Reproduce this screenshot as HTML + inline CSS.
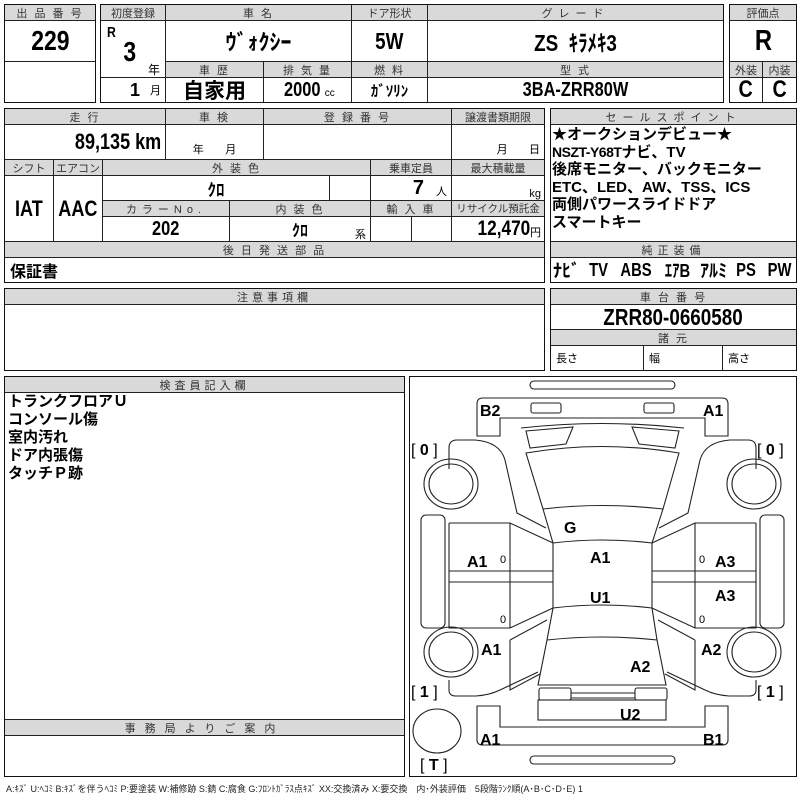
<!DOCTYPE html>
<html><head><meta charset="utf-8"><style>
*{margin:0;padding:0;box-sizing:border-box}
body{width:800px;height:800px;background:#fff;position:relative;overflow:hidden;font-family:"Liberation Sans","Noto Sans CJK JP",sans-serif;color:#000}
.c{position:absolute;border:1px solid #222;display:flex;align-items:center;justify-content:center;white-space:nowrap}
.h{background:#d9d9d9;font-size:11px;color:#333;letter-spacing:2px}
.o{position:absolute;border:1.5px solid #111}
.v{font-family:"Liberation Sans","Noto Sans CJK JP",sans-serif;font-weight:bold}
.n{display:inline-block;transform:scaleX(.82)}
.nr{display:inline-block;transform:scaleX(.82);transform-origin:right center}
.t{position:absolute;white-space:nowrap}
svg{position:absolute;left:0;top:0}
</style></head><body>
<div class="c h" style="left:4px;top:4px;width:92px;height:17px">出 品 番 号</div>
<div class="c v" style="left:4px;top:20px;width:92px;height:42px;font-size:28px"><span class="n">229</span></div>
<div class="c" style="left:4px;top:61px;width:92px;height:42px"></div>
<div class="o" style="left:4px;top:4px;width:92px;height:99px"></div>
<div class="c h" style="left:100px;top:4px;width:66px;height:17px;letter-spacing:0">初度登録</div>
<div class="c h" style="left:165px;top:4px;width:187px;height:17px">車 名</div>
<div class="c h" style="left:351px;top:4px;width:77px;height:17px;letter-spacing:0">ドア形状</div>
<div class="c h" style="left:427px;top:4px;width:297px;height:17px;letter-spacing:6px">グレード</div>
<div class="c" style="left:100px;top:20px;width:66px;height:58px"></div>
<div class="t v" style="left:106px;top:24px;font-size:15px"><span class="n">R</span></div>
<div class="t v" style="left:122px;top:36px;font-size:28px"><span class="n">3</span></div>
<div class="t" style="left:148px;top:61px;font-size:12px">年</div>
<div class="c" style="left:100px;top:77px;width:66px;height:26px;justify-content:flex-end;padding-right:4px"><span class="v" style="font-size:18px">1</span><span style="font-size:11px;margin-left:10px">月</span></div>
<div class="c v" style="left:165px;top:20px;width:187px;height:42px;font-size:22px">ｳﾞｫｸｼｰ</div>
<div class="c v" style="left:351px;top:20px;width:77px;height:42px;font-size:23px"><span class="n">5W</span></div>
<div class="c v" style="left:427px;top:20px;width:297px;height:42px;font-size:23px"><span class="n">ZS&nbsp; ｷﾗﾒｷ3</span></div>
<div class="c h" style="left:165px;top:61px;width:99px;height:17px">車 歴</div>
<div class="c h" style="left:263px;top:61px;width:89px;height:17px">排 気 量</div>
<div class="c h" style="left:351px;top:61px;width:77px;height:17px">燃 料</div>
<div class="c h" style="left:427px;top:61px;width:297px;height:17px">型 式</div>
<div class="c v" style="left:165px;top:77px;width:99px;height:26px;font-size:21px">自家用</div>
<div class="c" style="left:263px;top:77px;width:89px;height:26px"><span class="v n" style="font-size:20px">2000</span><span style="font-size:10px;margin-top:6px">cc</span></div>
<div class="c v" style="left:351px;top:77px;width:77px;height:26px;font-size:15px">ｶﾞｿﾘﾝ</div>
<div class="c v" style="left:427px;top:77px;width:297px;height:26px;font-size:20px"><span class="n">3BA-ZRR80W</span></div>
<div class="o" style="left:100px;top:4px;width:624px;height:99px"></div>
<div class="c h" style="left:729px;top:4px;width:68px;height:17px;letter-spacing:0">評価点</div>
<div class="c v" style="left:729px;top:20px;width:68px;height:42px;font-size:29px"><span class="n">R</span></div>
<div class="c h" style="left:729px;top:61px;width:34px;height:17px;letter-spacing:0">外装</div>
<div class="c h" style="left:762px;top:61px;width:35px;height:17px;letter-spacing:0">内装</div>
<div class="c v" style="left:729px;top:77px;width:34px;height:26px;font-size:24px"><span class="n">C</span></div>
<div class="c v" style="left:762px;top:77px;width:35px;height:26px;font-size:24px"><span class="n">C</span></div>
<div class="o" style="left:729px;top:4px;width:68px;height:99px"></div>
<div class="c h" style="left:4px;top:108px;width:162px;height:17px">走 行</div>
<div class="c h" style="left:165px;top:108px;width:99px;height:17px">車 検</div>
<div class="c h" style="left:263px;top:108px;width:189px;height:17px">登 録 番 号</div>
<div class="c h" style="left:451px;top:108px;width:94px;height:17px;letter-spacing:0">譲渡書類期限</div>
<div class="c v" style="left:4px;top:124px;width:162px;height:36px;justify-content:flex-end;padding-right:4px;font-size:22px"><span class="nr">89,135 km</span></div>
<div class="c" style="left:165px;top:124px;width:99px;height:36px;align-items:flex-end;font-size:11px;padding-bottom:2px">年&nbsp;&nbsp;&nbsp;&nbsp;&nbsp;&nbsp;&nbsp;月</div>
<div class="c" style="left:263px;top:124px;width:189px;height:36px"></div>
<div class="c" style="left:451px;top:124px;width:94px;height:36px;align-items:flex-end;justify-content:flex-end;padding:0 4px 2px 0;font-size:11px">月&nbsp;&nbsp;&nbsp;&nbsp;&nbsp;&nbsp;&nbsp;日</div>
<div class="c h" style="left:4px;top:159px;width:50px;height:17px;letter-spacing:0">シフト</div>
<div class="c h" style="left:53px;top:159px;width:50px;height:17px;letter-spacing:0">エアコン</div>
<div class="c h" style="left:102px;top:159px;width:269px;height:17px">外 装 色</div>
<div class="c h" style="left:370px;top:159px;width:82px;height:17px;letter-spacing:0">乗車定員</div>
<div class="c h" style="left:451px;top:159px;width:94px;height:17px;letter-spacing:0">最大積載量</div>
<div class="c v" style="left:4px;top:175px;width:50px;height:67px;font-size:22px"><span class="n">IAT</span></div>
<div class="c v" style="left:53px;top:175px;width:50px;height:67px;font-size:22px"><span class="n">AAC</span></div>
<div class="c v" style="left:102px;top:175px;width:228px;height:26px;font-size:17px">ｸﾛ</div>
<div class="c" style="left:329px;top:175px;width:42px;height:26px"></div>
<div class="c" style="left:370px;top:175px;width:82px;height:26px;justify-content:flex-end;padding-right:4px"><span class="v" style="font-size:20px">7</span><span style="font-size:11px;margin:6px 0 0 12px">人</span></div>
<div class="c" style="left:451px;top:175px;width:94px;height:26px;justify-content:flex-end;padding-right:3px;font-size:11px;align-items:flex-end">kg</div>
<div class="c h" style="left:102px;top:200px;width:128px;height:17px;letter-spacing:5px">カラーNo.</div>
<div class="c h" style="left:229px;top:200px;width:142px;height:17px">内 装 色</div>
<div class="c h" style="left:370px;top:200px;width:82px;height:17px">輸 入 車</div>
<div class="c h" style="left:451px;top:200px;width:94px;height:17px;letter-spacing:0;font-size:10.5px">リサイクル預託金</div>
<div class="c v" style="left:102px;top:216px;width:128px;height:26px;font-size:20px"><span class="n">202</span></div>
<div class="c v" style="left:229px;top:216px;width:142px;height:26px;font-size:16px">ｸﾛ</div>
<div class="t" style="left:355px;top:226px;font-size:11px">系</div>
<div class="c" style="left:370px;top:216px;width:42px;height:26px"></div>
<div class="c" style="left:411px;top:216px;width:41px;height:26px"></div>
<div class="c" style="left:451px;top:216px;width:94px;height:26px;justify-content:flex-end;padding-right:3px"><span class="v nr" style="font-size:21px">12,470</span><span style="font-size:11px;margin-top:6px">円</span></div>
<div class="c h" style="left:4px;top:241px;width:541px;height:17px">後 日 発 送 部 品</div>
<div class="c v" style="left:4px;top:257px;width:541px;height:26px;justify-content:flex-start;padding-left:5px;font-size:16px">保証書</div>
<div class="o" style="left:4px;top:108px;width:541px;height:175px"></div>
<div class="c h" style="left:550px;top:108px;width:247px;height:17px;letter-spacing:6px">セールスポイント</div>
<div class="c" style="left:550px;top:124px;width:247px;height:118px"></div>
<div class="t v" style="left:552px;top:126px;font-size:15px;line-height:17.6px">★オークションデビュー★<br><span style="font-size:14px;letter-spacing:-0.5px">NSZT-Y68T</span>ナビ、TV<br>後席モニター、バックモニター<br>ETC、LED、AW、TSS、ICS<br>両側パワースライドドア<br>スマートキー</div>
<div class="c h" style="left:550px;top:241px;width:247px;height:17px;letter-spacing:5px">純正装備</div>
<div class="c v" style="left:550px;top:257px;width:247px;height:26px;font-size:18px;justify-content:space-between;padding:0 2px"><span>ﾅﾋﾞ</span><span class="n">TV</span><span class="n">ABS</span><span class="n">ｴｱB</span><span>ｱﾙﾐ</span><span class="n">PS</span><span class="n">PW</span></div>
<div class="o" style="left:550px;top:108px;width:247px;height:175px"></div>
<div class="c h" style="left:4px;top:288px;width:541px;height:17px;letter-spacing:4px">注意事項欄</div>
<div class="o" style="left:4px;top:288px;width:541px;height:83px"></div>
<div class="c h" style="left:550px;top:288px;width:247px;height:17px">車 台 番 号</div>
<div class="c v" style="left:550px;top:304px;width:247px;height:26px;font-size:23px"><span class="n">ZRR80-0660580</span></div>
<div class="c h" style="left:550px;top:329px;width:247px;height:17px">諸 元</div>
<div class="c" style="left:550px;top:345px;width:94px;height:26px;justify-content:flex-start;padding-left:5px;font-size:11px">長さ</div>
<div class="c" style="left:643px;top:345px;width:80px;height:26px;justify-content:flex-start;padding-left:5px;font-size:11px">幅</div>
<div class="c" style="left:722px;top:345px;width:75px;height:26px;justify-content:flex-start;padding-left:5px;font-size:11px">高さ</div>
<div class="o" style="left:550px;top:288px;width:247px;height:83px"></div>
<div class="c h" style="left:4px;top:376px;width:401px;height:17px;letter-spacing:4px">検査員記入欄</div>
<div class="t v" style="left:8px;top:393px;font-size:15px;line-height:18px">トランクフロアＵ<br>コンソール傷<br>室内汚れ<br>ドア内張傷<br>タッチＰ跡</div>
<div class="c h" style="left:4px;top:719px;width:401px;height:17px;letter-spacing:9px">事務局よりご案内</div>
<div class="o" style="left:4px;top:376px;width:401px;height:401px"></div>
<div class="o" style="left:409px;top:376px;width:388px;height:401px"></div>
<div class="t" style="left:6px;top:782px;font-size:9px;color:#222">A:ｷｽﾞ U:ﾍｺﾐ B:ｷｽﾞを伴うﾍｺﾐ P:要塗装 W:補修跡 S:錆 C:腐食 G:ﾌﾛﾝﾄｶﾞﾗｽ点ｷｽﾞ XX:交換済み X:要交換　内･外装評価　5段階ﾗﾝｸ順(A･B･C･D･E) 1</div>
<svg width="800" height="800" viewBox="0 0 800 800" fill="none" stroke="#222" stroke-width="1.1">
<g id="L">
<path d="M449,469 L449,448 Q449,440 457,440 L475,440 Q500,442 505,460 L517,513 L546,528"/>
<ellipse cx="451" cy="484" rx="27" ry="25"/><ellipse cx="451" cy="484" rx="22" ry="20"/>
<rect x="421" y="515" width="24" height="113" rx="5"/>
<path d="M449,523 L510,523 L553,543 M449,523 L449,628 L510,628 L553,608 M510,523 L510,628 M449,571 L553,571 M449,582 L553,582"/>
<ellipse cx="451" cy="652" rx="27" ry="25"/><ellipse cx="451" cy="652" rx="22" ry="20"/>
<path d="M510,640 L547,620 M510,640 L510,690 L540,674 M449,680 L449,690 Q449,696 456,696 L476,696 Q490,695 500,690 L538,672"/>
</g>
<use href="#L" transform="translate(1205,0) scale(-1,1)"/>
<rect x="530" y="381" width="145" height="8" rx="4"/>
<path d="M477,436 L477,404 Q477,398 483,398 L722,398 Q728,398 728,404 L728,436 L705,436 L705,418 L500,418 L500,436 Z"/>
<rect x="531" y="403" width="30" height="10" rx="2"/><rect x="644" y="403" width="30" height="10" rx="2"/>
<path d="M521,428 Q602,419 684,428 M526,431 L573,427 L566,444 L530,448 Z M679,431 L632,427 L639,444 L675,448 Z"/>
<path d="M526,453 Q602,440 679,453 L663,509 Q602,502 543,509 Z"/>
<path d="M543,509 L553,543 Q602,537 652,543 L663,509"/>
<path d="M553,543 L553,608 Q602,602 652,608 L652,543"/>
<path d="M553,608 L547,640 Q602,634 657,640 L652,608 M547,640 L538,685 L666,685 L657,640"/>
<rect x="539" y="688" width="32" height="12" rx="2"/><rect x="635" y="688" width="32" height="12" rx="2"/>
<path d="M571,693 L635,693 M571,698 L635,698"/>
<rect x="538" y="700" width="128" height="20"/>
<path d="M477,706 L500,706 L500,727 L705,727 L705,706 L728,706 L728,740 Q728,745 722,745 L483,745 Q477,745 477,740 Z"/>
<rect x="530" y="756" width="145" height="8" rx="4"/>
<ellipse cx="437" cy="731" rx="24" ry="22"/>
<g fill="#000" stroke="none" font-family="Liberation Sans,sans-serif" font-weight="bold" font-size="16">
<text x="480" y="416">B2</text><text x="703" y="416">A1</text>
<text x="564" y="533">G</text>
<text x="467" y="567">A1</text><text x="590" y="563">A1</text><text x="715" y="567">A3</text>
<text x="715" y="601">A3</text><text x="590" y="603">U1</text>
<text x="481" y="655">A1</text><text x="701" y="655">A2</text><text x="630" y="672">A2</text>
<text x="620" y="720">U2</text><text x="480" y="745">A1</text><text x="703" y="745">B1</text>
</g>
<g fill="#000" stroke="none" font-family="Liberation Sans,sans-serif" font-size="16">
<text x="411" y="455">[ <tspan font-weight="bold">0</tspan> ]</text><text x="757" y="455">[ <tspan font-weight="bold">0</tspan> ]</text>
<text x="411" y="697">[ <tspan font-weight="bold">1</tspan> ]</text><text x="757" y="697">[ <tspan font-weight="bold">1</tspan> ]</text>
<text x="420" y="770">[ <tspan font-weight="bold">T</tspan> ]</text>
<text x="500" y="563" font-size="11">0</text><text x="500" y="623" font-size="11">0</text>
<text x="699" y="563" font-size="11">0</text><text x="699" y="623" font-size="11">0</text>
</g>
</svg>
</body></html>
